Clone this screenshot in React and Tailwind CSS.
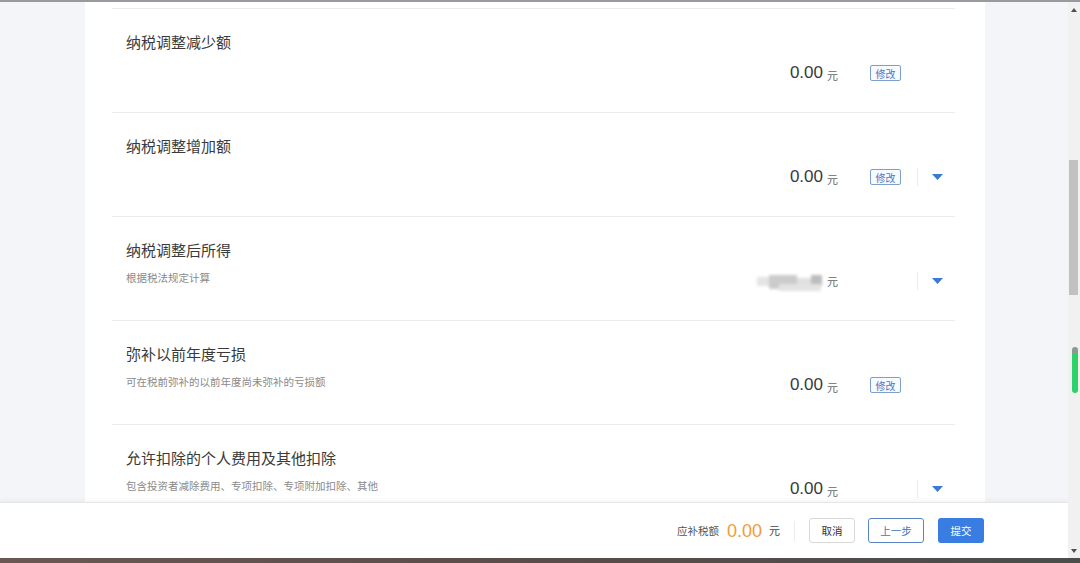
const FONT = { fontFamily: '"Liberation Sans", "Noto Sans CJK SC", sans-serif' };
const CJK = { fontFamily: '"Noto Sans CJK SC", "Liberation Sans", sans-serif' };

const rows = [
  { title: "纳税调整减少额", sub: "", value: "0.00", edit: true, arrow: false },
  { title: "纳税调整增加额", sub: "", value: "0.00", edit: true, arrow: true },
  { title: "纳税调整后所得", sub: "根据税法规定计算", value: null, edit: false, arrow: true },
  { title: "弥补以前年度亏损", sub: "可在税前弥补的以前年度尚未弥补的亏损额", value: "0.00", edit: true, arrow: false },
  { title: "允许扣除的个人费用及其他扣除", sub: "包含投资者减除费用、专项扣除、专项附加扣除、其他", value: "0.00", edit: false, arrow: true },
];

const Blurred = () => (
  <div className="relative w-[66px] h-[18px] mb-[-2px] blur-[1.5px]">
    <div className="absolute left-0 top-[4px] w-[16px] h-[9px] bg-[#e4e4e4]" />
    <div className="absolute left-[12px] top-[2px] w-[28px] h-[14px] bg-[#cbcbcb]" />
    <div className="absolute left-[40px] top-[5px] w-[14px] h-[8px] bg-[#e0e0e0]" />
    <div className="absolute left-[54px] top-[2px] w-[11px] h-[11px] bg-[#bcbcbc]" />
    <div className="absolute left-[22px] top-[11px] w-[42px] h-[7px] bg-[#e3e3e3]" />
  </div>
);

const Row = ({ title, sub, value, edit, arrow }) => (
  <div className="flex h-[104px] border-b border-[#ededed] pl-[14px]">
    <div className="flex-1 pt-[24px]">
      <div className="text-[15px] leading-[18px] text-[#3a3a3a]" style={CJK}>{title}</div>
      {sub && (
        <div className="mt-[12px] text-[10.5px] leading-[14px] text-[#8a8a8a]" style={CJK}>{sub}</div>
      )}
    </div>
    <div className="flex items-center self-start mt-[53px] h-[22px]">
      <div className="flex items-end justify-end">
        {value ? (
          <span className="text-[17px] leading-[20px] text-[#3a3a3a]" style={FONT}>{value}</span>
        ) : (
          <Blurred />
        )}
        <span className="ml-[4px] text-[11px] leading-[15px] text-[#666]" style={CJK}>元</span>
      </div>
      <div className="w-[79px] pl-[32px] flex items-center">
        {edit && (
          <span className="inline-flex items-center justify-center w-[31px] h-[16px] border border-[#7d9fcf] rounded-[2px] text-[10px] text-[#4a78c2] bg-[#f7faff]" style={CJK}>
            修改
          </span>
        )}
      </div>
      <div className={"w-px h-[18px] " + (arrow ? "bg-[#ececec]" : "")} />
      <div className="w-[37px] pl-[14px] flex items-center">
        {arrow && (
          <svg width="11" height="6" viewBox="0 0 11 6">
            <path d="M0 0h11L5.5 6z" fill="#3a78d8" />
          </svg>
        )}
      </div>
    </div>
  </div>
);

export default function App() {
  return (
    <div className="w-[1080px] h-[563px] flex flex-col overflow-hidden bg-white" style={FONT}>
      <div className="h-[2px] bg-[#979b9f]" />
      <div className="flex-1 flex min-h-0">
        <div className="flex-1 flex flex-col min-w-0">
          <div className="flex-1 flex min-h-0 bg-[#f4f5f8] overflow-hidden">
            <div className="w-[85px]" />
            <div className="w-[900px] bg-white pl-[27px] pr-[30px]">
              <div className="h-[7px] border-b border-[#ededed]" />
              {rows.map((r) => (
                <Row key={r.title} {...r} />
              ))}
            </div>
          </div>
          <div className="h-[56px] bg-white border-t border-[#e6e6e6] shadow-[0_-2px_4px_rgba(0,0,0,0.04)] flex items-center justify-end pr-[84px]">
            <span className="text-[10.5px] text-[#555] mr-[8px]" style={CJK}>应补税额</span>
            <span className="text-[18px] leading-[22px] text-[#f29b37] mr-[7px]">0.00</span>
            <span className="text-[11px] text-[#444]" style={CJK}>元</span>
            <div className="w-px h-[20px] bg-[#ececec] ml-[14px] mr-[14px]" />
            <button className="w-[46px] h-[25px] border border-[#d9d9d9] rounded-[3px] text-[10.5px] text-[#333] bg-white" style={CJK}>取消</button>
            <button className="ml-[13px] w-[56px] h-[25px] border border-[#5b85c6] rounded-[3px] text-[10.5px] text-[#3f72c4] bg-white" style={CJK}>上一步</button>
            <button className="ml-[14px] w-[46px] h-[25px] rounded-[3px] text-[10.5px] text-white bg-[#3a7de2]" style={CJK}>提交</button>
          </div>
        </div>
        <div className="relative w-[12px] bg-[#f1f1f1]">
          <svg className="absolute left-[3px] top-[6px]" width="6" height="4" viewBox="0 0 6 4">
            <path d="M0 4L3 0l3 4z" fill="#505050" />
          </svg>
          <div className="absolute left-[1px] top-[158px] w-[9px] h-[135px] bg-[#c1c1c1]" />
          <div className="absolute left-[4px] top-[345px] w-[6px] h-[46px] rounded-[3px] bg-[#2fd16a] border-t-[6px] border-[#8a9a90]" />
          <svg className="absolute left-[3px] bottom-[5px]" width="6" height="4" viewBox="0 0 6 4">
            <path d="M0 0h6L3 4z" fill="#505050" />
          </svg>
        </div>
      </div>
      <div className="h-[5px] bg-gradient-to-r from-[#6a5753] via-[#5a4c4a] to-[#4a4d4a]" />
    </div>
  );
}
